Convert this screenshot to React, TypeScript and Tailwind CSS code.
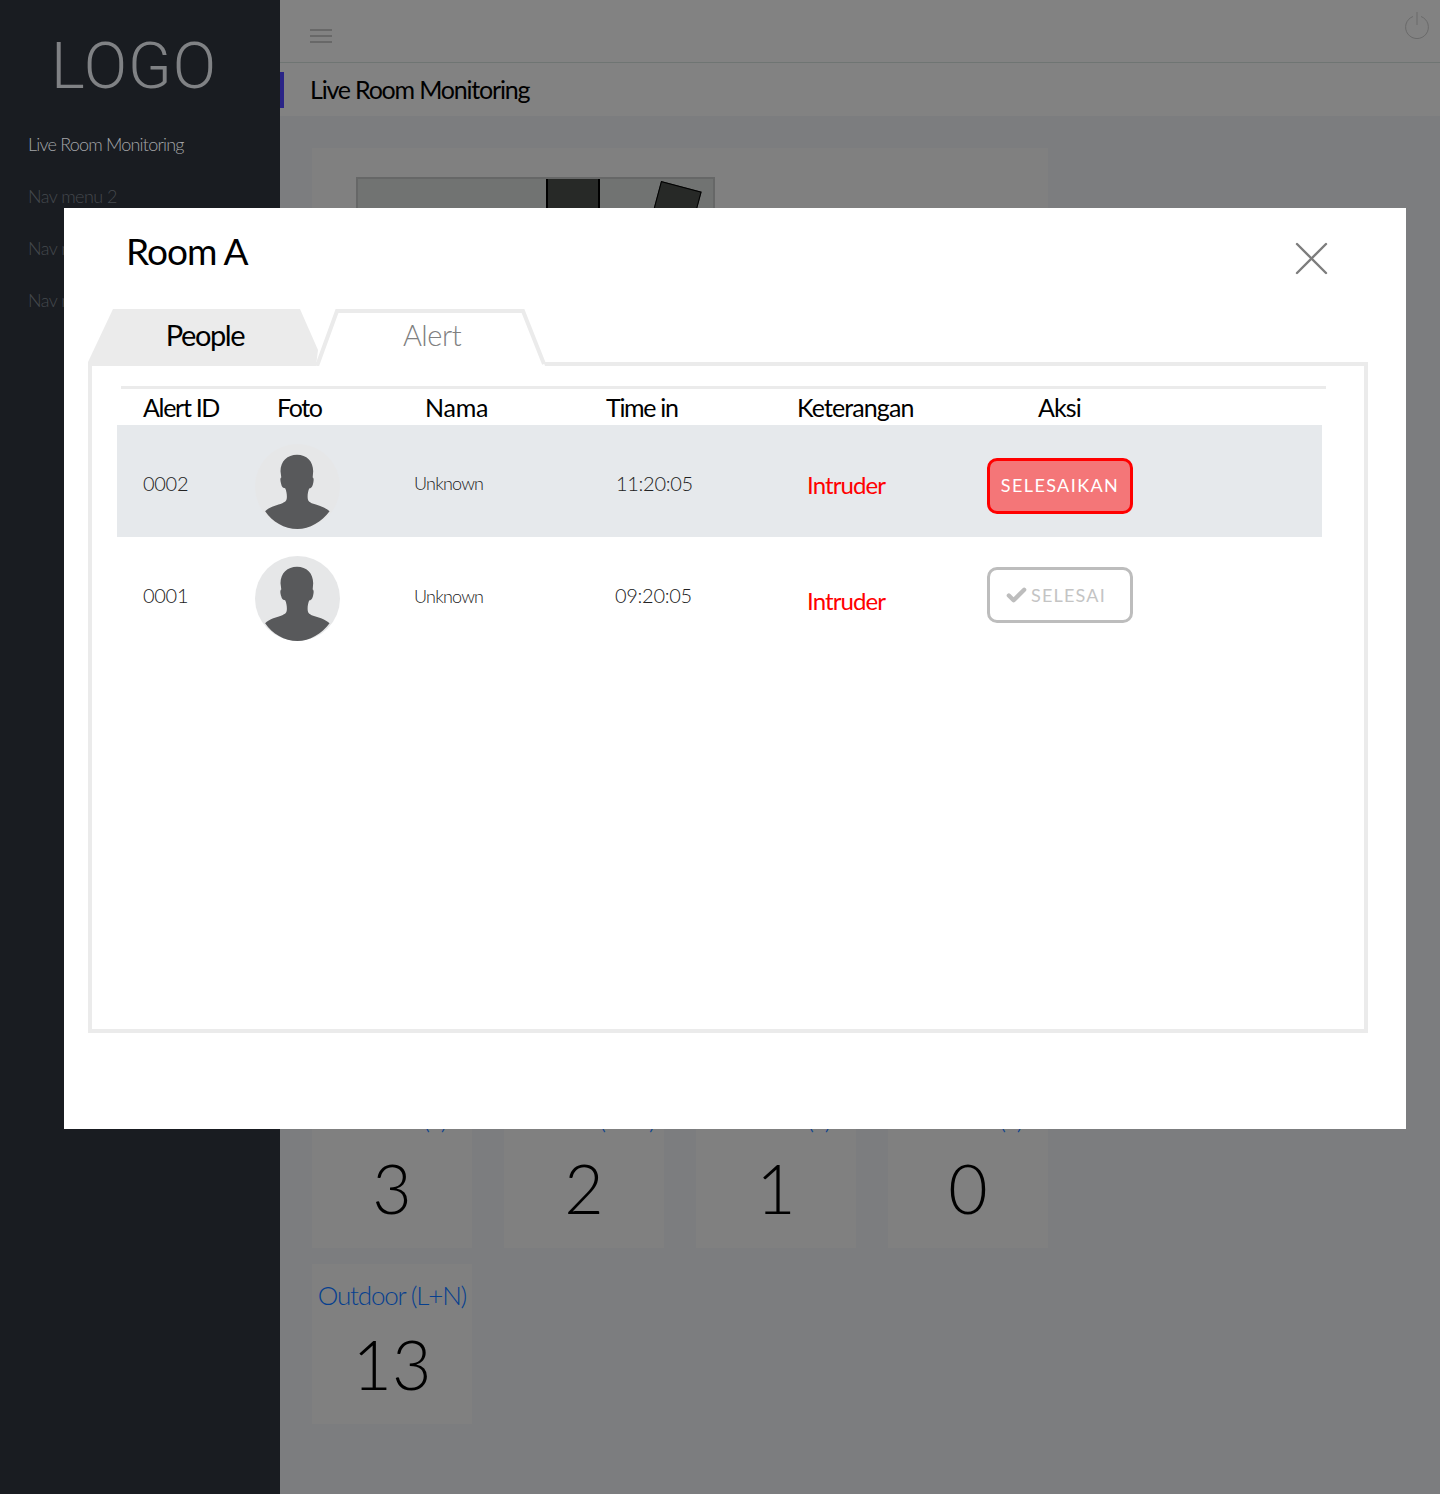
import { Check } from 'lucide-react'

const FUTURA = "font-['Lato',sans-serif]"

const TILES = [
  { label: 'Room 1 (L)', value: '3' },
  { label: 'Room 2 (L+N)', value: '2' },
  { label: 'Room 3 (L)', value: '1' },
  { label: 'Room 4 (L)', value: '0' },
]

const COLUMNS = 'grid grid-cols-[26px_112px_159px_201px_192px_180px_1fr]'

export default function App() {
  return (
    <div className={`relative flex h-[1494px] w-[1440px] overflow-hidden bg-[#7c7d7f] ${FUTURA}`}>
      <Sidebar />
      <Main />
      <AlertModal />
    </div>
  )
}

function Sidebar() {
  return (
    <aside className="w-[280px] shrink-0 bg-[#191c21] pl-7">
      <div className="-ml-7 flex h-[118px] items-center pt-[16px] pl-[51px] font-['Roboto',sans-serif] text-[64px] leading-none font-light tracking-[1px] text-[#808285]">
        LOGO
      </div>
      <nav className="flex flex-col text-[18px] font-light">
        <a className="flex h-[52px] items-center tracking-[-0.8px] text-[#a3a5a8]">Live Room Monitoring</a>
        <a className="flex h-[52px] items-center tracking-[-0.55px] text-[#44484d]">Nav menu 2</a>
        <a className="flex h-[52px] items-center tracking-[-0.55px] text-[#44484d]">Nav menu 3</a>
        <a className="flex h-[52px] items-center tracking-[-0.55px] text-[#44484d]">Nav menu 4</a>
      </nav>
    </aside>
  )
}

function Main() {
  return (
    <main className="flex min-w-0 flex-1 flex-col">
      <header className="flex h-[63px] items-center justify-between border-b border-[#6f7573] bg-[#828282] pr-[10px] pl-[30px]">
        <div className="mt-[10px] flex w-[22px] flex-col gap-[4px]">
          <span className="h-[2px] bg-[#686868]" />
          <span className="h-[2px] bg-[#686868]" />
          <span className="h-[2px] bg-[#686868]" />
        </div>
        <svg width="26" height="28" viewBox="0 0 26 28" fill="none" stroke="#6a6a6a" strokeWidth="1" className="-mt-[12px]">
          <path d="M9 5.5a11.4 11.4 0 1 0 8 0" />
          <path d="M13 1v13" />
        </svg>
      </header>
      <div className="flex h-[53px] items-center bg-[#828282]">
        <span className="h-[36px] w-1 bg-[#2a2487]" />
        <h1 className="ml-[26px] text-[25px] tracking-[-1.2px] text-black">Live Room Monitoring</h1>
      </div>
      <div className="flex flex-col gap-4 pt-8 pl-8">
        <section className="h-[924px] w-[736px] bg-[#808080] pt-[29px] pl-[45px]">
          <div className="relative -ml-px h-[500px] w-[359px] overflow-hidden border-2 border-[#666767] bg-[#717372]">
            <div className="absolute top-[-2px] left-[188px] h-[160px] w-[54px] border-2 border-black bg-[#272927]" />
            <div className="absolute top-[6px] left-[292px] h-[80px] w-[42px] rotate-[15deg] border border-black bg-[#272927]" />
          </div>
        </section>
        <div className="flex gap-8">
          {TILES.map((tile) => (
            <Tile key={tile.label} {...tile} />
          ))}
        </div>
        <div className="flex gap-8">
          <Tile label="Outdoor (L+N)" value="13" />
        </div>
      </div>
    </main>
  )
}

function Tile({ label, value }: { label: string; value: string }) {
  return (
    <div className="flex h-[160px] w-[160px] flex-col items-center bg-[#808080] pt-[15px]">
      <div className="h-[36px] text-[26px] leading-[32px] font-light tracking-[-1.2px] whitespace-nowrap text-[#063f8f]">{label}</div>
      <div className="mt-[10px] text-[68px] leading-[78px] font-light text-black">{value}</div>
    </div>
  )
}

function AlertModal() {
  return (
    <div className="absolute top-[208px] left-[64px] h-[921px] w-[1342px] bg-white pl-6">
      <div className="flex h-[100px] justify-between pr-[78px]">
        <h2 className="mt-[18px] ml-[38px] text-[37px] leading-[50px] tracking-[-1px] text-black">Room A</h2>
        <svg width="34" height="34" viewBox="0 0 34 34" stroke="#7d7d7d" strokeWidth="2.4" strokeLinecap="round" className="mt-[33px]">
          <path d="M3 3 L32 32" />
          <path d="M32 3 L3 32" />
        </svg>
      </div>

      <div className="relative z-10 -mb-1 flex h-[58px] w-[460px]">
        <svg width="460" height="58" viewBox="0 0 460 58" className="absolute inset-0">
          <polygon points="0,54 25,1 212,1 230,42 228,58 0,58" fill="#ebebeb" />
          <polygon points="228,58 249,3 435,3 457,58" fill="#ffffff" />
          <polyline points="229,58 249,3 435,3 456,56" fill="none" stroke="#ebebeb" strokeWidth="4" />
        </svg>
        <button className="relative h-[53px] w-[228px] pl-1.5 text-[29px] tracking-[-1.4px] text-black">People</button>
        <button className="relative h-[53px] w-[232px] text-[29px] font-light tracking-[-0.5px] text-[#808080]">Alert</button>
      </div>

      <div className="h-[671px] w-[1280px] border-4 border-[#ebebeb] pt-5 pl-[25px]">
        <div className="ml-1 h-[3px] w-[1205px] bg-[#ebebeb]" />
        <div className="grid h-[36px] grid-cols-[26px_134px_148px_181px_191px_241px_1fr] items-center text-[25px] tracking-[-0.9px] text-black">
          <span />
          <span className="tracking-[-1.3px]">Alert ID</span>
          <span className="tracking-[-1.4px]">Foto</span>
          <span className="tracking-[-0.2px]">Nama</span>
          <span className="tracking-[-1.3px]">Time in</span>
          <span>Keterangan</span>
          <span>Aksi</span>
        </div>

        <div className={`${COLUMNS} h-[112px] w-[1205px] bg-[#e6e9ec]`}>
          <span />
          <Digits className="pt-[45px]">0002</Digits>
          <div className="pt-[19px]">
            <Avatar />
          </div>
          <Name className="pt-[45px]" />
          <Digits className="pt-[45px] pl-[1px]">11:20:05</Digits>
          <Intruder className="pt-[42px]" />
          <div className="pt-[33px]">
            <button className="h-[56px] w-[146px] rounded-[10px] border-[3px] border-[#ff0000] bg-[#f47678] pb-[2px] text-[18px] tracking-[1.4px] text-white">
              SELESAIKAN
            </button>
          </div>
        </div>

        <div className={`${COLUMNS} h-[113px] w-[1205px]`}>
          <span />
          <Digits className="pt-[45px]">0001</Digits>
          <div className="pt-[19px]">
            <Avatar />
          </div>
          <Name className="pt-[46px]" />
          <Digits className="pt-[45px]">09:20:05</Digits>
          <Intruder className="pt-[46px]" />
          <div className="pt-[30px]">
            <button className="flex h-[56px] w-[146px] items-center gap-[3px] rounded-[10px] border-[3px] border-[#bdbdbd] bg-white pl-[15px] text-[18px] tracking-[1.2px] text-[#c4c4c4]">
              <Check size={23} strokeWidth={4.5} className="text-[#bdbdbd]" />
              SELESAI
            </button>
          </div>
        </div>
      </div>
    </div>
  )
}

function Digits({ className, children }: { className: string; children: React.ReactNode }) {
  return <div className={`text-[20px] leading-[26px] font-light tracking-[-0.3px] text-[#222] ${className}`}>{children}</div>
}

function Name({ className }: { className: string }) {
  return <div className={`text-[18px] leading-[26px] font-light tracking-[-0.8px] text-[#222] ${className}`}>Unknown</div>
}

function Intruder({ className }: { className: string }) {
  return <div className={`text-[24px] leading-[36px] tracking-[-0.9px] text-[#ff0000] ${className}`}>Intruder</div>
}

function Avatar() {
  return (
    <svg width="85" height="85" viewBox="0 0 84 84" aria-hidden="true">
      <circle cx="42" cy="42" r="42" fill="#e6e7e8" />
      <path
        fill="#58595b"
        d="M41.5 10.7C51 10.7 57.5 17 57.5 27L57 33C58.5 33.5 58 37 57.2 40C56.5 43 55 43.5 53.5 44C52.5 47 52 49 52 52C52 56 53 57 56 58.5C62 60.5 69 62 73.7 66.5C66 77 54 84 42 84C29 84 17 77 10 66.5C14 62 22 60.5 27 58.5C30.5 57 31.5 56 31.5 52C31.5 49 31 47 30 44C28.5 43.5 26.5 43 26 40C25 37 24.5 33.5 26 33L25.2 27C25.2 17 32 10.7 41.5 10.7Z"
      />
    </svg>
  )
}
